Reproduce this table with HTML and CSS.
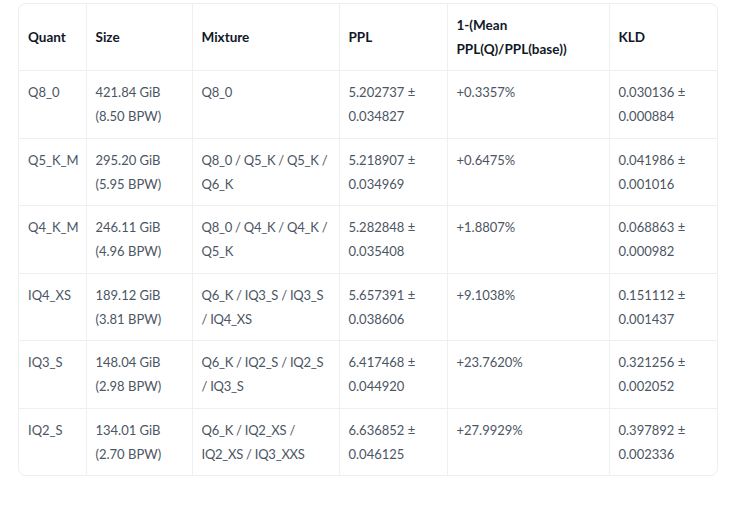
FILE: index.html
```html
<!DOCTYPE html>
<html lang="en">
<head>
<meta charset="utf-8">
<title>Quant table</title>
<link rel="stylesheet" href="styles.css">
</head>
<body>
<div class="table-wrap">
<table class="quant-table">
<colgroup>
<col class="c-quant"><col class="c-size"><col class="c-mix"><col class="c-ppl"><col class="c-mean"><col class="c-kld">
</colgroup>
<thead>
<tr><th>Quant</th><th>Size</th><th>Mixture</th><th>PPL</th><th>1-(Mean PPL(Q)/PPL(base))</th><th>KLD</th></tr>
</thead>
<tbody>
<tr><td>Q8_0</td><td>421.84 GiB (8.50 BPW)</td><td class="mix">Q8_0</td><td>5.202737 ± 0.034827</td><td>+0.3357%</td><td>0.030136 ± 0.000884</td></tr>
<tr><td>Q5_K_M</td><td>295.20 GiB (5.95 BPW)</td><td class="mix">Q8_0 / Q5_K / Q5_K / Q6_K</td><td>5.218907 ± 0.034969</td><td>+0.6475%</td><td>0.041986 ± 0.001016</td></tr>
<tr><td>Q4_K_M</td><td>246.11 GiB (4.96 BPW)</td><td class="mix">Q8_0 / Q4_K / Q4_K / Q5_K</td><td>5.282848 ± 0.035408</td><td>+1.8807%</td><td>0.068863 ± 0.000982</td></tr>
<tr><td>IQ4_XS</td><td>189.12 GiB (3.81 BPW)</td><td class="mix">Q6_K / IQ3_S / IQ3_S / IQ4_XS</td><td>5.657391 ± 0.038606</td><td>+9.1038%</td><td>0.151112 ± 0.001437</td></tr>
<tr><td>IQ3_S</td><td>148.04 GiB (2.98 BPW)</td><td class="mix">Q6_K / IQ2_S / IQ2_S / IQ3_S</td><td>6.417468 ± 0.044920</td><td>+23.7620%</td><td>0.321256 ± 0.002052</td></tr>
<tr><td>IQ2_S</td><td>134.01 GiB (2.70 BPW)</td><td class="mix">Q6_K / IQ2_XS / IQ2_XS / IQ3_XXS</td><td>6.636852 ± 0.046125</td><td>+27.9929%</td><td>0.397892 ± 0.002336</td></tr>
</tbody>
</table>
</div>
</body>
</html>
```

FILE: styles.css
```css
html, body {
  margin: 0;
  padding: 0;
  background: #ffffff;
}
body {
  font-family: "Lato", "Liberation Sans", sans-serif;
  font-size: 13px;
  color: #4b5563;
  padding: 3px 0 0 18px;
}
.table-wrap {
  width: 698px;
  border: 1px solid #eeeeee;
  border-radius: 8px;
  overflow: hidden;
}
.quant-table {
  width: 100%;
  border-collapse: collapse;
  table-layout: fixed;
}
.c-quant { width: 67px; }
.c-size { width: 106px; }
.c-mix { width: 147px; }
.c-ppl { width: 108px; }
.c-mean { width: 162px; }
.c-kld { width: 108px; }
.quant-table th,
.quant-table td {
  border: 1px solid #efefef;
  padding: 9.25px 9px;
  line-height: 24px;
  text-align: left;
}
.quant-table tr > :first-child { border-left: none; }
.quant-table tr > :last-child { border-right: none; }
.quant-table thead tr th { border-top: none; }
.quant-table tbody tr:last-child td { border-bottom: none; }
.quant-table th {
  color: #111827;
  font-size: 13.5px;
  font-weight: 700;
  vertical-align: middle;
  padding-top: 9px;
  padding-bottom: 9px;
}
.quant-table td {
  vertical-align: top;
}
.quant-table td.mix {
  letter-spacing: -0.25px;
}
```
